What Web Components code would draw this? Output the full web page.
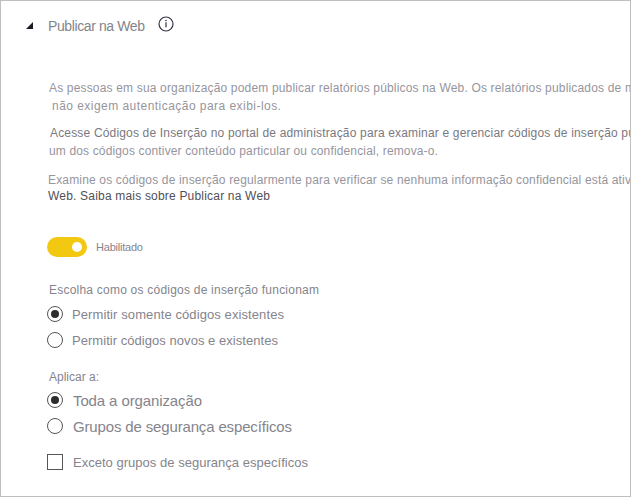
<!DOCTYPE html>
<html lang="pt-BR">
<head>
<meta charset="utf-8">
<title>Publicar na Web</title>
<style>
html,body{margin:0;height:100%;overflow:hidden}
body{background:#fff;font-family:"Liberation Sans",Arial,sans-serif}
</style>
</head>
<body>
<settings-page></settings-page>
<script>
/* One line of text, tracked so that it fills the given width. */
class TextLine extends HTMLElement{
  constructor(){
    super();
    this.attachShadow({mode:'open'}).innerHTML=`<style>
      :host{display:block;white-space:pre;font-size:12px;line-height:18px;color:var(--ink,#96959d)}
      span{display:inline-block}
    </style><span><slot></slot></span>`;
  }
  connectedCallback(){
    const s=this.shadowRoot.querySelector('span');
    this.style.fontSize=(this.getAttribute('size')||12)+'px';
    const w=+this.getAttribute('fit');
    if(w){
      const n=this.textContent.length;
      s.style.letterSpacing='0.001px';
      s.style.letterSpacing=((w-s.getBoundingClientRect().width)/(n-1)).toFixed(4)+'px';
    }
  }
}
/* Radio button or check box with its label. */
class ChoiceItem extends HTMLElement{
  constructor(){
    super();
    this.attachShadow({mode:'open'}).innerHTML=`<style>
      :host{display:flex;align-items:center;height:18px}
      i{box-sizing:border-box;width:16px;height:16px;border:1px solid #555;border-radius:50%;display:grid;place-items:center;flex:none;margin-right:var(--gap,9px)}
      :host([checked]) i::before{content:"";width:8px;height:8px;border-radius:50%;background:#2e2d2d}
      :host([square]) i{border-radius:0;border-color:#555}
      ::slotted(*){padding-top:2px}
    </style><i></i><slot></slot>`;
  }
}
class ToggleSwitch extends HTMLElement{
  constructor(){
    super();
    this.attachShadow({mode:'open'}).innerHTML=`<style>
      :host{display:flex;align-items:center;height:20px}
      b{box-sizing:border-box;width:40px;height:20px;padding:5px;border-radius:10px;background:#f2c811;display:flex;justify-content:flex-end;margin-right:9px}
      b::before{content:"";width:10px;height:10px;border-radius:50%;background:#fff}
    </style><b></b><slot></slot>`;
  }
}
class SectionHeader extends HTMLElement{
  constructor(){
    super();
    this.attachShadow({mode:'open'}).innerHTML=`<style>
      :host{display:flex;align-items:center;height:18px}
      svg{display:block;flex:none}
      ::slotted(*){padding-top:2px}
      .caret{margin-right:15px}
      .info{margin:0 0 3px 13px}
    </style>
    <svg class="caret" width="7" height="7" viewBox="0 0 7 7"><path d="M7 0V7H0Z" fill="#1c1a26"/></svg>
    <slot></slot>
    <svg class="info" width="16" height="16" viewBox="0 0 16 16"><circle cx="8" cy="8" r="7" fill="none" stroke="#343047" stroke-width="1.2"/><path d="M8 6.3V11.3" stroke="#343047" stroke-width="1.2"/><circle cx="8" cy="4.5" r=".8" fill="#343047"/></svg>`;
  }
}
class SettingsPage extends HTMLElement{
  constructor(){
    super();
    this.attachShadow({mode:'open'}).innerHTML=`<style>
      :host{display:block;box-sizing:border-box;width:631px;height:497px;border:1px solid #bfbfbf;overflow:hidden;padding-top:15px}
      section-header{padding-left:25px;--ink:#85848b}
      .body{padding-left:46px}
      .text{padding-top:45px}
      .dark{--ink:#7a7981}
      .link{--ink:#515057}
      .mid{--ink:#85848c}
    </style>
    <section-header><text-line size="14" fit="97">Publicar na Web</text-line></section-header>
    <div class="body text">
      <text-line fit="586" style="padding-left:2px">As pessoas em sua organização podem publicar relatórios públicos na Web. Os relatórios publicados de m</text-line>
      <text-line fit="229" style="padding-left:5px">não exigem autenticação para exibi-los.</text-line>
      <text-line class="dark" fit="585" style="padding-left:3px;margin-top:9px">Acesse Códigos de Inserção no portal de administração para examinar e gerenciar códigos de inserção pu</text-line>
      <text-line fit="389" style="padding-left:2px">um dos códigos contiver conteúdo particular ou confidencial, remova-o.</text-line>
      <text-line fit="583" style="padding-left:1px;margin-top:11px">Examine os códigos de inserção regularmente para verificar se nenhuma informação confidencial está ativ</text-line>
      <text-line class="link" fit="222" style="padding-left:1px;margin-top:-2px">Web. Saiba mais sobre Publicar na Web</text-line>
    </div>
    <div class="body mid">
      <toggle-switch style="margin-top:32px"><text-line size="11" fit="47">Habilitado</text-line></toggle-switch>
      <text-line fit="270" style="padding-left:2px;margin-top:24px">Escolha como os códigos de inserção funcionam</text-line>
      <choice-item checked style="margin-top:6px"><text-line size="13" fit="212">Permitir somente códigos existentes</text-line></choice-item>
      <choice-item style="margin-top:8px"><text-line size="13" fit="206">Permitir códigos novos e existentes</text-line></choice-item>
      <text-line fit="50" style="padding-left:2px;margin-top:19px">Aplicar a:</text-line>
      <choice-item checked style="margin-top:5px;--gap:10px"><text-line size="15" fit="129">Toda a organização</text-line></choice-item>
      <choice-item style="margin-top:8px;--gap:10px"><text-line size="15" fit="219">Grupos de segurança específicos</text-line></choice-item>
      <choice-item square style="margin-top:18px;--gap:10px"><text-line size="13" fit="235">Exceto grupos de segurança específicos</text-line></choice-item>
    </div>`;
  }
}
customElements.define('settings-page',SettingsPage);
customElements.define('section-header',SectionHeader);
customElements.define('toggle-switch',ToggleSwitch);
customElements.define('choice-item',ChoiceItem);
customElements.define('text-line',TextLine);
</script>
</body>
</html>
